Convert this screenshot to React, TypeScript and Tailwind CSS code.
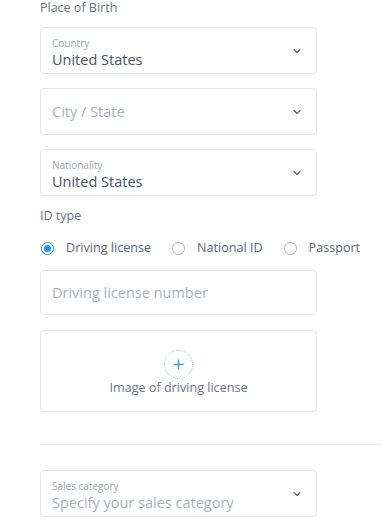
import { ChevronDown } from 'lucide-react';

const font = { fontFamily: '"Open Sans", "Liberation Sans", sans-serif' };

function SelectBox({ label, value, placeholder }: { label?: string; value?: string; placeholder?: boolean }) {
    return (
        <div className={`flex items-center justify-between h-[47px] border border-[#e4e7ee] rounded-[4px] pl-[11px] pr-[13px] ${label ? 'pt-[4px]' : ''}`}>
            <div className="flex flex-col">
                {label && <span className="text-[10px] leading-[12px] text-[#9aa3b3]">{label}</span>}
                <span className={`${label ? 'mt-[2px]' : ''} text-[14.5px] leading-[18px] ${placeholder ? 'text-[#a8b0c0]' : 'text-[#4a5468]'}`}>{value}</span>
            </div>
            <ChevronDown size={12} strokeWidth={2.2} className={`text-[#5a6478] ${label ? '-mt-[4px]' : ''}`} />
        </div>
    );
}

function Radio({ label, checked }: { label: string; checked?: boolean }) {
    return (
        <div className="flex items-center gap-[12px]">
            {checked ? (
                <span className="flex items-center justify-center w-[13px] h-[13px] rounded-full border-[1.5px] border-[#2196f3]">
                    <span className="w-[7px] h-[7px] rounded-full bg-[#2196f3]" />
                </span>
            ) : (
                <span className="w-[13px] h-[13px] rounded-full border-[1.5px] border-[#a9b0bd]" />
            )}
            <span className="text-[12.6px] leading-[16px] text-[#5c667a]">{label}</span>
        </div>
    );
}

export default function App() {
    return (
        <div className="w-[382px] h-[526px] bg-white overflow-hidden pl-10" style={font}>
            <div className="w-[277px]">
                <p className="text-[12.5px] leading-[16px] text-[#6b7487]">Place of Birth</p>
                <div className="mt-[11px] flex flex-col gap-[14px]">
                    <SelectBox label="Country" value="United States" />
                    <SelectBox value="City / State" placeholder />
                    <SelectBox label="Nationality" value="United States" />
                </div>
                <p className="mt-[13px] text-[12.5px] leading-[14px] text-[#6b7487]">ID type</p>
                <div className="mt-[17px] flex items-center gap-[21px] ml-[1px] w-[340px] h-[16px]">
                    <Radio label="Driving license" checked />
                    <Radio label="National ID" />
                    <Radio label="Passport" />
                </div>
                <div className="mt-[14px] flex items-center h-[45px] border border-[#e4e7ee] rounded-[4px] pl-[11px]">
                    <span className="text-[14.5px] leading-[18px] text-[#a8b0c0]">Driving license number</span>
                </div>
                <div className="mt-[15px] flex flex-col items-center justify-center h-[82px] border border-[#e4e7ee] rounded-[4px] pt-[2px]">
                    <span className="flex items-center justify-center w-[29px] h-[29px] rounded-full border border-dotted border-[#8cc8f5] text-[#3a9ae8]">
                        <svg width="11" height="11" viewBox="0 0 11 11">
                            <path d="M5.5 0.5v10M0.5 5.5h10" stroke="currentColor" strokeWidth="1.4" />
                        </svg>
                    </span>
                    <span className="mt-[2px] text-[12.6px] leading-[14px] text-[#6b7487]">Image of driving license</span>
                </div>
            </div>
            <div className="mt-[32px] border-t border-[#e8eaef]" />
            <div className="w-[277px] mt-[25px]">
                <SelectBox label="Sales category" value="Specify your sales category" placeholder />
            </div>
        </div>
    );
}
